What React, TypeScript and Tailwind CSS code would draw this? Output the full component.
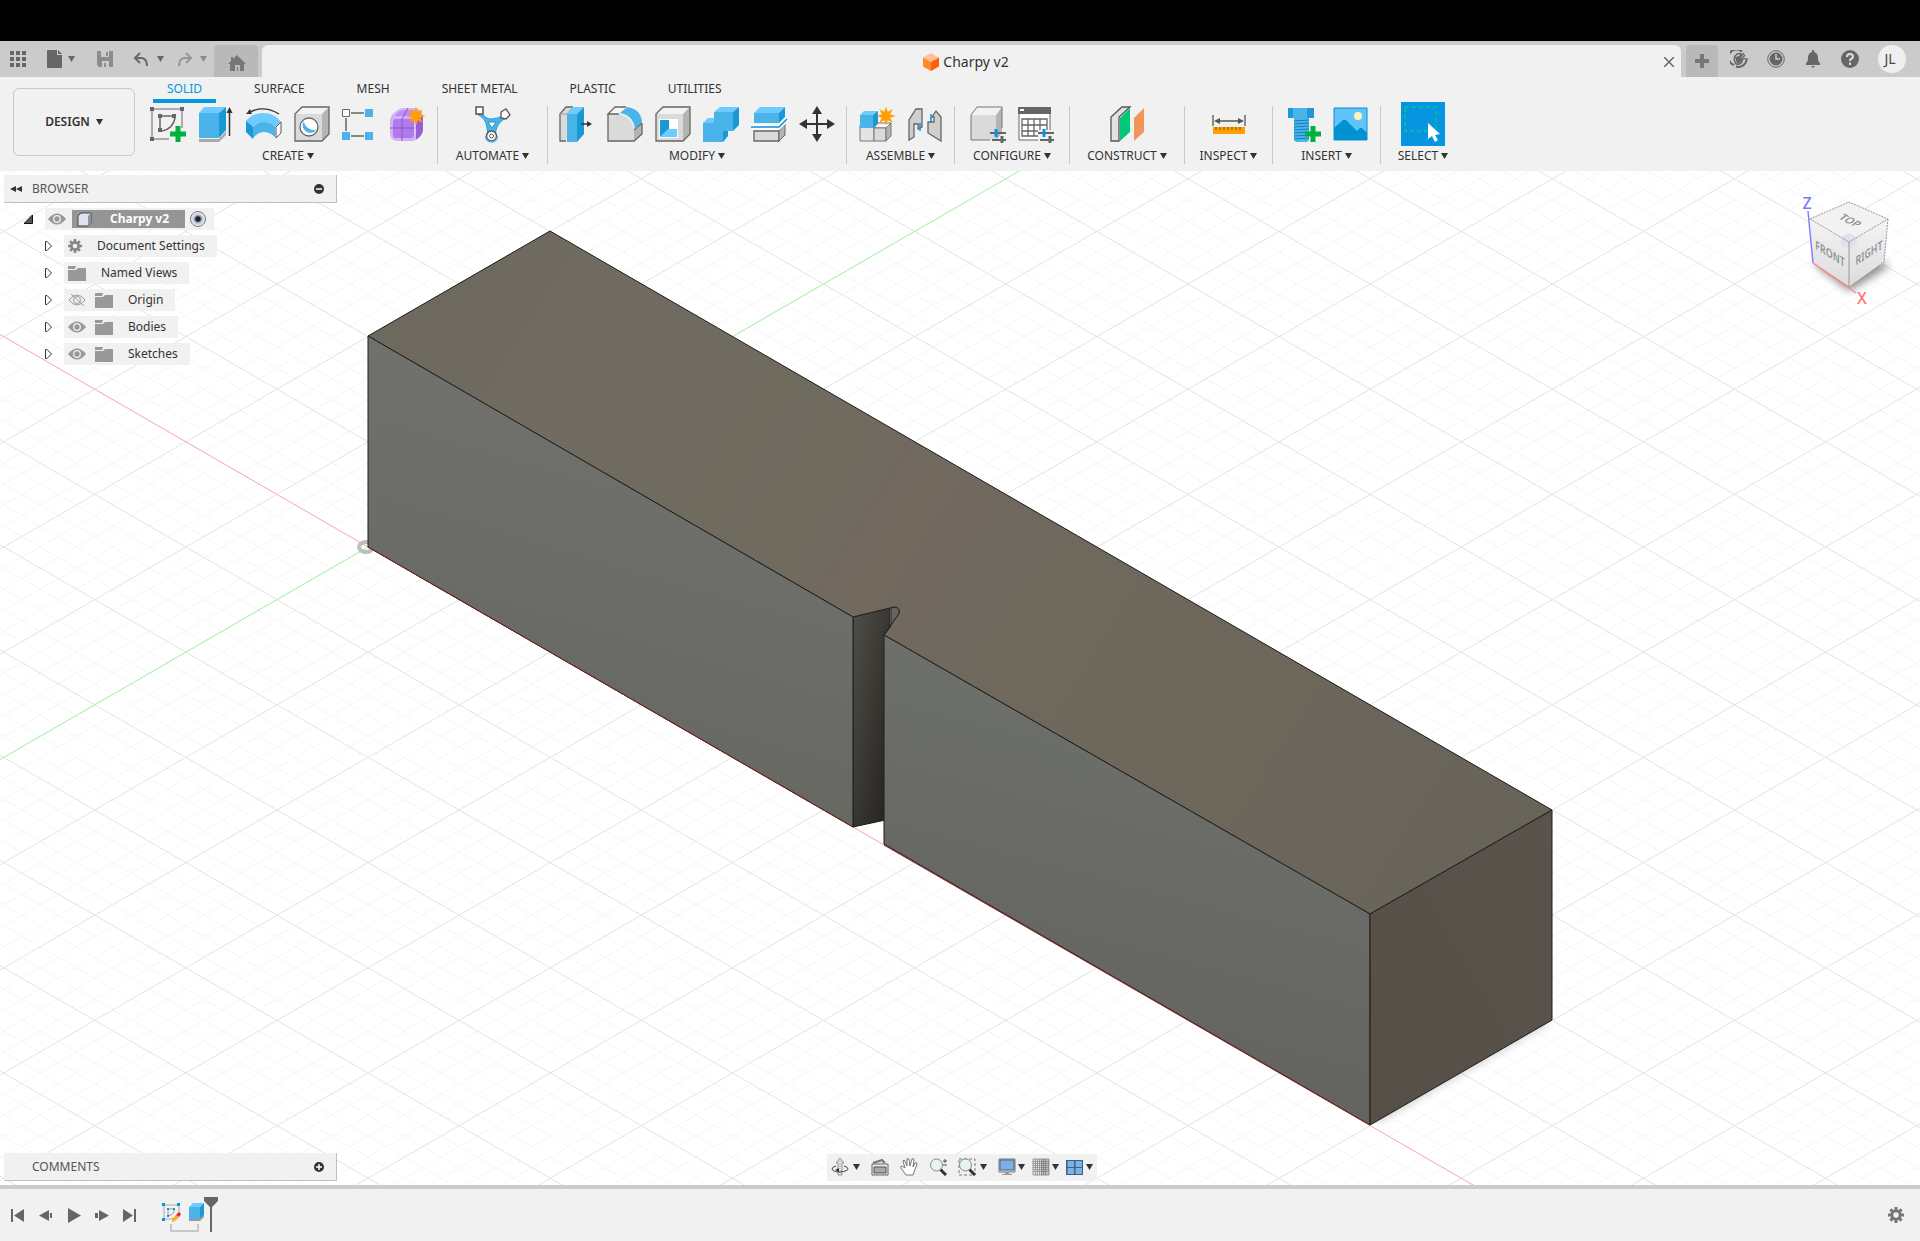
import type { ReactNode } from "react";

/* ---------- small shared pieces ---------- */

function Caret({ className = "text-[#333]" }: { className?: string }) {
  return (
    <svg width="7" height="6" viewBox="0 0 7 6" className={className} aria-hidden="true">
      <path d="M0 0H7L3.5 6Z" fill="currentColor" />
    </svg>
  );
}

function Star({ x, y }: { x: number; y: number }) {
  const points = Array.from({ length: 16 }, (_, i) => {
    const r = i % 2 ? 4.5 : 9.5;
    const a = (i * Math.PI) / 8;
    return `${x + r * Math.sin(a)},${y - r * Math.cos(a)}`;
  }).join(" ");
  return <polygon points={points} fill="#ffa000" />;
}

function Plus({ x, y }: { x: number; y: number }) {
  return <path d={`M${x} ${y - 8}v16M${x - 8} ${y}h16`} stroke="#00b140" strokeWidth="5" />;
}

function Sliders() {
  return (
    <g fill="none" strokeWidth="2">
      <path d="M20 27H36M22 34H36" stroke="#666" />
      <path d="M32 30V37" stroke="#666" strokeWidth="3" />
      <path d="M26 23V31" stroke="#0696e0" strokeWidth="3" />
    </g>
  );
}

function Gear({ size, className }: { size: number; className: string }) {
  return (
    <svg width={size} height={size} viewBox="0 0 16 16" className={className} aria-hidden="true">
      <g stroke="currentColor" strokeWidth="3">
        <path d="M8 0V16M0 8H16M2.400 2.400L13.600 13.600M13.600 2.400L2.400 13.600" />
      </g>
      <circle cx="8" cy="8" r="5.600" fill="currentColor" />
      <circle cx="8" cy="8" r="2.700" fill="#f1f1f1" />
    </svg>
  );
}

/* ---------- ribbon icons, all on a 36px box ---------- */

const icons: Record<string, ReactNode> = {
  sketch: (
    <>
      <path d="M2 5V31M4 3H30M32 5V22M4 33H19" fill="none" stroke="#666" />
      <path d="M10 12V22M12 10H22M25 12Q23 23 12 25" fill="none" stroke="#666" strokeWidth="1.500" />
      <path d="M0 1h4v4H0zM30 1h4v4h-4zM0 31h4v4H0zM8 8h4v4H8zM22 8h4v4h-4zM8 22h4v4H8z" fill="#666" />
      <Plus x={28} y={28} />
    </>
  ),
  extrude: (
    <>
      <path d="M1 7L6 1H28L21 7Z" fill="#6fcbff" />
      <path d="M1 7H21V32H1Z" fill="#4ab3ea" />
      <path d="M21 7L28 1V24L21 32Z" fill="#1a97d5" />
      <path d="M1 33H21L28 25V29L21 36H1Z" fill="#aaa" />
      <path d="M31.500 6V30" stroke="#333" strokeWidth="1.500" />
      <path d="M31.500 1L34.500 7H28.500Z" fill="#333" />
    </>
  ),
  revolve: (
    <>
      <path d="M0 15Q6 7 17 7Q29 7 35 16L28 22Q24 16 17 16Q10 16 6 22Z" fill="#6fcbff" />
      <path d="M0 15L7 21V33L0 26Z" fill="#1a97d5" />
      <path d="M7 21Q11 16 17 16Q24 16 29 21V31Q24 26 17 26Q10 27 7 33Z" fill="#4ab3ea" />
      <path d="M30 21L35 16V27L30 32Z" fill="#fff" stroke="#555" />
      <path d="M4 6Q18 -1 33 8" fill="none" stroke="#333" strokeWidth="1.300" />
      <path d="M0 8L4 3L6 8Z" fill="#333" />
    </>
  ),
  hole: (
    <>
      <path d="M1 8L8 1H35L28 8Z" fill="#f2f2f2" />
      <path d="M1 8H28V35H1Z" fill="#dadada" />
      <path d="M28 8L35 1V28L28 35Z" fill="#b4b4b4" />
      <path d="M1 8L8 1H35V28L28 35H1Z" fill="none" stroke="#666" strokeWidth="1.300" />
      <circle cx="15" cy="21" r="9" fill="#fff" stroke="#666" strokeWidth="1.300" />
      <path d="M10 15A7.500 7.500 0 1 0 22.500 23.500Q18 25 14 22Q10 19 10 15Z" fill="#4ab3ea" />
    </>
  ),
  pattern: (
    <>
      <path d="M9 7H22M9 30H22M4 12V25" stroke="#666" strokeWidth="1.500" />
      <path d="M.500 3.500h7v7h-7z" fill="#fff" stroke="#666" />
      <path d="M23 3h8v8h-8zM0 26h8v8H0zM23 26h8v8h-8z" fill="#4ab3ea" />
    </>
  ),
  form: (
    <>
      <path d="M8 4Q10 2 14 2H26Q33 4 33 12V24Q32 30 27 33Q25 35 20 35H7Q0 34 0 27V14Q1 8 8 4Z" fill="#d3b0f8" />
      <path d="M26 13L33 9V24Q32 30 27 33L24 34Q26 30 26 26Z" fill="#9a5fd0" />
      <path d="M3 16Q3 13 6 13H21Q24 13 24 16V29Q24 32 21 32H6Q3 32 3 29Z" fill="#b07aee" />
      <path d="M5 10Q9 4 14 4H24V10Z" fill="#c08cf5" />
      <path d="M0 22H25L33 17M12 35V13L18 2" fill="none" stroke="#8f57c8" />
      <path d="M25 34V14L31 9" fill="none" stroke="#e2c8ff" strokeWidth="1.500" />
      <Star x={26} y={10} />
    </>
  ),
  automate: (
    <>
      <path d="M5 5Q11 14 17 13Q24 13 29 8L31 12Q23 16 21 24L20 30H13L12 22Q11 12 2 8Z" fill="#4ab3ea" stroke="#2b9bd8" />
      <path d="M13 16H21L17 22Z" fill="#fff" stroke="#1a97d5" />
      <path d="M1 1H8V8H1Z" fill="#fff" stroke="#555" strokeWidth="1.500" />
      <path d="M26 6L31 3L35 9L31 13L26 12Z" fill="#fff" stroke="#555" strokeWidth="1.300" />
      <circle cx="16.500" cy="30" r="5" fill="#fff" stroke="#555" strokeWidth="1.500" />
      <circle cx="16.500" cy="30" r="2" fill="none" stroke="#555" />
      <path d="M10.500 30A6 6 0 0 0 22.500 30" fill="none" stroke="#4ab3ea" strokeWidth="1.500" />
    </>
  ),
  pressPull: (
    <>
      <path d="M7 35H1V8L7 1H14" fill="#dadada" stroke="#666" strokeWidth="1.300" />
      <path d="M1 8H8L14 1" fill="none" stroke="#999" />
      <path d="M8 8L14 1H25L18 8Z" fill="#6fcbff" />
      <path d="M8 8H18V36H8Z" fill="#4ab3ea" />
      <path d="M18 8L25 1V28L18 36Z" fill="#1a97d5" />
      <path d="M22 18H29" stroke="#333" strokeWidth="1.500" />
      <path d="M28 15L33 18L28 21Z" fill="#333" />
    </>
  ),
  fillet: (
    <>
      <path d="M1 8L8 1H19L12 8Z" fill="#f5f5f5" />
      <path d="M1 8H11Q26 10 27 26V35H1Z" fill="#dadada" />
      <path d="M27 24L35 17V28L27 35Z" fill="#b4b4b4" />
      <path d="M12 8H1L8 1H19M1 8V35H27L35 28V17M27 24L35 17" fill="none" stroke="#666" strokeWidth="1.300" />
      <path d="M13 7L20 1Q34 3 35 16L28 23Q26 9 13 7Z" fill="#4ab3ea" />
    </>
  ),
  shell: (
    <>
      <path d="M1 8L8 1H35L28 8Z" fill="#f2f2f2" />
      <path d="M1 8H28V35H1Z" fill="#dadada" />
      <path d="M28 8L35 1V28L28 35Z" fill="#b4b4b4" />
      <path d="M1 8L8 1H35V28L28 35H1Z" fill="none" stroke="#666" strokeWidth="1.300" />
      <path d="M4 13H23V32H4Z" fill="#fff" />
      <path d="M5 14H14V24L5 31Z" fill="#1a97d5" />
      <path d="M5 31L13 23H22V31Z" fill="#6fcbff" />
    </>
  ),
  combine: (
    <>
      <path d="M0 17L5 12H14L11 17ZM11 6L17 1H36L30 6Z" fill="#6fcbff" />
      <path d="M0 17H11V6H30V25H20V36H0Z" fill="#4ab3ea" />
      <path d="M30 6L36 1V19L30 25ZM20 25H25V30L20 36Z" fill="#1a97d5" />
    </>
  ),
  split: (
    <>
      <path d="M3 7L9 1H34L28 7Z" fill="#6fcbff" />
      <path d="M3 7H28V17H3Z" fill="#4ab3ea" />
      <path d="M28 7L34 1V11L28 17Z" fill="#1a97d5" />
      <path d="M3 25H28V35H3Z" fill="#dadada" stroke="#666" strokeWidth="1.300" />
      <path d="M28 25L34 18V29L28 35Z" fill="#b4b4b4" stroke="#666" />
      <path d="M0 21H28L36 13" fill="none" stroke="#fff" strokeWidth="5" />
      <path d="M0 21H28L36 13" fill="none" stroke="#0a8fdc" strokeWidth="1.500" />
    </>
  ),
  move: (
    <>
      <path d="M18 5V31M5 18H31" stroke="#333" strokeWidth="2" />
      <path d="M18 0L23 8H13ZM18 36L23 28H13ZM0 18L8 13V23ZM36 18L28 13V23Z" fill="#333" />
    </>
  ),
  newComponent: (
    <>
      <path d="M1 19H15V35H1Z" fill="#e4e4e4" stroke="#777" />
      <path d="M15 22L19 17H32L27 22Z" fill="#f5f5f5" stroke="#777" />
      <path d="M15 22H27V35H15Z" fill="#dadada" stroke="#777" />
      <path d="M27 22L32 17V30L27 35Z" fill="#b4b4b4" stroke="#777" />
      <path d="M1 9L5 5H19L14 9Z" fill="#6fcbff" />
      <path d="M1 9H14V22H1Z" fill="#4ab3ea" />
      <path d="M14 9L19 5V17L14 22Z" fill="#1a97d5" />
      <Star x={27} y={10} />
    </>
  ),
  joint: (
    <>
      <path d="M2 34V14L9 3H15V21L11 23V18H7V31Z" fill="#cfcfcf" stroke="#666" strokeWidth="1.300" />
      <path d="M25 11L29 5L34 11V35L21 27V16H27V11Z" fill="#cfcfcf" stroke="#666" strokeWidth="1.300" />
      <path d="M13 17V25M24 8V16" stroke="#0a8fdc" strokeWidth="1.500" />
    </>
  ),
  configuration: (
    <>
      <path d="M1 9L7 1H32L26 9Z" fill="#f2f2f2" />
      <path d="M1 9H26V34H1Z" fill="#dadada" />
      <path d="M26 9L32 1V27L26 34Z" fill="#b4b4b4" />
      <path d="M32 22V1H7L1 9V34H20" fill="none" stroke="#777" />
      <Sliders />
    </>
  ),
  configTable: (
    <>
      <path d="M1 2H32V34H1Z" fill="#fff" stroke="#666" />
      <path d="M0 1H33V8H0Z" fill="#666" />
      <path d="M2 3H6V5H2Z" fill="#fff" />
      <path d="M4 13H29V30H4ZM4 19H29M4 25H29M10 13V30M16 13V30M22 13V30" fill="none" stroke="#666" strokeWidth="1.300" />
      <path d="M20 24H36V37H20Z" fill="#f1f1f1" />
      <Sliders />
    </>
  ),
  plane: (
    <>
      <path d="M2 11L13 1H21L10 11V35H2Z" fill="#e2e2e2" stroke="#555" strokeWidth="1.300" />
      <path d="M11 12L21 2V26L11 35Z" fill="#00c878" />
      <path d="M25 12L35 2V26L25 35Z" fill="#f29559" />
    </>
  ),
  measure: (
    <>
      <path d="M2 9V20M34 9V20M5 15H31" stroke="#555" strokeWidth="1.300" />
      <path d="M3 15L9 12V18ZM33 15L27 12V18Z" fill="#555" />
      <path d="M2 21H34V28H2Z" fill="#ffa000" />
      <path d="M5 21V24M9 21V24M13 21V24M17 21V24M21 21V24M25 21V24M29 21V24" stroke="#7a4a00" />
    </>
  ),
  fastener: (
    <>
      <path d="M3 2H29V12H3Z" fill="#1f98d8" />
      <path d="M8 2H22V12H8Z" fill="#4ab3ea" />
      <path d="M9 12H24V34L22 36H11L9 34Z" fill="#4ab3ea" />
      <path d="M9 15L24 14M9 18L24 17M9 21L24 20M9 24L24 23M9 27L24 26M9 30L24 29M9 33L24 32" stroke="#1280bd" />
      <Plus x={28} y={28} />
    </>
  ),
  canvas: (
    <>
      <path d="M1 2H34V34H1Z" fill="#5fc4fa" stroke="#0a8fcf" />
      <path d="M1 22L10 14Q12 13 14 15L24 25L27 22Q28 21 30 23L34 27V34H1Z" fill="#0292d2" />
      <circle cx="25" cy="10" r="4" fill="#fdf6b8" />
    </>
  ),
  select: (
    <>
      <path d="M0 1H31V25H0Z" fill="none" stroke="#00c896" strokeWidth="1.500" strokeDasharray="4 3" />
      <path d="M23 17L35 28L30 29L33 34L30 36L27 30L23 33Z" fill="#fff" />
    </>
  ),
};

interface RibbonGroupProps {
  label: string;
  tools: { icon: string; name: string; active?: boolean }[];
  className: string;
}

function RibbonGroup({ label, tools, className }: RibbonGroupProps) {
  return (
    <div className={`flex h-[58px] shrink-0 flex-col items-center justify-between border-[#c8c8c8] ${className}`}>
      <div className="flex h-9 items-center gap-3">
        {tools.map((tool) => (
          <button key={tool.name} aria-label={tool.name} className={tool.active ? "-m-1 bg-[#0696e0] p-1" : ""}>
            <svg width="36" height="36" viewBox="0 0 36 36" className="overflow-visible">
              {icons[tool.icon]}
            </svg>
          </button>
        ))}
      </div>
      <button className="flex items-center gap-[3px] leading-4">
        {label}
        <Caret />
      </button>
    </div>
  );
}

/* ---------- title bar ---------- */

function TitleBar() {
  return (
    <header className="flex h-9 shrink-0 items-end bg-[#cbcbcb] text-[#666]">
      <div className="flex h-9 w-[214px] shrink-0 items-center pl-2.5">
        <button aria-label="Show data panel">
          <svg width="16" height="16" viewBox="0 0 16 16" fill="currentColor">
            <path d="M0 0h4v4H0zM6 0h4v4H6zM12 0h4v4h-4zM0 6h4v4H0zM6 6h4v4H6zM12 6h4v4h-4zM0 12h4v4H0zM6 12h4v4H6zM12 12h4v4h-4z" />
          </svg>
        </button>
        <button aria-label="File" className="ml-[21px] flex items-center gap-1.5">
          <svg width="15" height="18" viewBox="0 0 15 18" fill="currentColor">
            <path d="M0 1Q0 0 1 0H10V5H15V17Q15 18 14 18H1Q0 18 0 17ZM11 0L15 4H11Z" />
          </svg>
          <Caret className="text-[#666]" />
        </button>
        <button aria-label="Save" className="ml-[22px]">
          <svg width="16" height="16" viewBox="0 0 16 16" className="text-[#8c8c8c]">
            <path d="M0 0H16V16H2L0 14Z" fill="currentColor" />
            <path d="M4 0H12V6H4ZM5 10H12V16H5Z" fill="#cbcbcb" />
            <path d="M9 1H11V5H9ZM7 12H9V16H7Z" fill="currentColor" />
          </svg>
        </button>
        <button aria-label="Undo" className="ml-[21px] flex items-center gap-2">
          <svg width="15" height="14" viewBox="0 0 15 14" fill="none" stroke="currentColor" strokeWidth="2">
            <path d="M6 1L1 6L6 11M1 6H8Q13 7 13 14" />
          </svg>
          <Caret className="text-[#666]" />
        </button>
        <button aria-label="Redo" className="ml-[13px] flex items-center gap-2">
          <svg width="15" height="14" viewBox="0 0 15 14" fill="none" stroke="#969696" strokeWidth="2">
            <path d="M9 1L14 6L9 11M14 6H7Q2 7 2 14" />
          </svg>
          <Caret className="text-[#8c8c8c]" />
        </button>
      </div>
      <button aria-label="Home" className="flex h-8 w-11 shrink-0 items-center justify-center rounded-t bg-[#b9b9b9] pt-1 pl-0.5">
        <svg width="18" height="16" viewBox="0 0 18 16" className="text-[#777]">
          <path d="M9 0L18 9H16V16H2V9H0L3 6V2H5V4Z" fill="currentColor" />
          <path d="M7 10H12V16H7Z" fill="#b9b9b9" />
          <path d="M9 12H10V16H9Z" fill="currentColor" />
        </svg>
      </button>
      <div className="ml-1 flex h-8 flex-1 items-center rounded-t-md bg-[#f1f1f1] pt-0.5 pr-[7px]">
        <div className="flex flex-1 items-center justify-center gap-1 pl-1.5 text-sm text-[#333]">
          <svg width="16" height="18" viewBox="0 0 16 18" aria-hidden="true">
            <path d="M8 0L16 4.500L8 9L0 4.500Z" fill="#ffc09a" />
            <path d="M0 4.500L8 9V18L0 13.500Z" fill="#ff8a2c" />
            <path d="M16 4.500L8 9V18L16 13.500Z" fill="#ff5f0a" />
          </svg>
          Charpy v2
        </div>
        <button aria-label="Close tab">
          <svg width="10" height="10" viewBox="0 0 10 10" stroke="#666" strokeWidth="1.500">
            <path d="M0 0L10 10M10 0L0 10" />
          </svg>
        </button>
      </div>
      <button aria-label="New tab" className="ml-[5px] flex h-8 w-8 shrink-0 items-center justify-center rounded-t bg-[#b9b9b9]">
        <svg width="14" height="14" viewBox="0 0 14 14" stroke="#777" strokeWidth="4">
          <path d="M7 0V14M0 7H14" />
        </svg>
      </button>
      <div className="flex h-9 shrink-0 items-center gap-[19px] pr-3.5 pl-3">
        <button aria-label="Extensions">
          <svg width="18" height="18" viewBox="0 0 18 18" fill="none" stroke="currentColor">
            <path d="M4 15A8 8 0 1 1 12 1.600M16.500 8A8 8 0 0 1 6 16.500" strokeWidth="2" />
            <path d="M6 14Q2 8 7 4Q10 3 11 4L9 8L14 3M10 10L15 5M11 11L15 8M6 14Q11 15 12 11L8 7" strokeWidth="1.500" />
            <path d="M5 7L10 6L12 11L7 14Z" fill="currentColor" stroke="none" />
          </svg>
        </button>
        <button aria-label="Job status">
          <svg width="18" height="18" viewBox="0 0 18 18">
            <circle cx="9" cy="9" r="8.300" fill="none" stroke="currentColor" />
            <circle cx="9" cy="9" r="6.500" fill="currentColor" />
            <path d="M9 4V9H13" fill="none" stroke="#cbcbcb" strokeWidth="1.500" />
          </svg>
        </button>
        <button aria-label="Notifications">
          <svg width="18" height="18" viewBox="0 0 18 18" fill="currentColor">
            <path d="M8 0H10V2Q14 3 14 8Q14 12 16 13V15H2V13Q4 12 4 8Q4 3 8 2ZM7 16H11L9 18Z" />
          </svg>
        </button>
        <button aria-label="Help">
          <svg width="18" height="18" viewBox="0 0 18 18">
            <circle cx="9" cy="9" r="9" fill="currentColor" />
            <path d="M6 7Q6 4 9 4Q12 4 12 6.500Q12 8 10 9Q9 9.500 9 11M9 12.500V15" fill="none" stroke="#dedede" strokeWidth="2" />
          </svg>
        </button>
        <button className="flex h-7 w-7 items-center justify-center rounded-full bg-[#efefef] pr-1 text-sm text-[#444]">JL</button>
      </div>
    </header>
  );
}

/* ---------- ribbon ---------- */

const tabs = ["SOLID", "SURFACE", "MESH", "SHEET METAL", "PLASTIC", "UTILITIES"];

const groups: RibbonGroupProps[] = [
  {
    label: "CREATE",
    className: "w-[299px] border-r",
    tools: [
      { icon: "sketch", name: "Create Sketch" },
      { icon: "extrude", name: "Extrude" },
      { icon: "revolve", name: "Revolve" },
      { icon: "hole", name: "Hole" },
      { icon: "pattern", name: "Rectangular Pattern" },
      { icon: "form", name: "Create Form" },
    ],
  },
  { label: "AUTOMATE", className: "w-[110px] border-r", tools: [{ icon: "automate", name: "Automated Modeling" }] },
  {
    label: "MODIFY",
    className: "w-[299px] border-r",
    tools: [
      { icon: "pressPull", name: "Press Pull" },
      { icon: "fillet", name: "Fillet" },
      { icon: "shell", name: "Shell" },
      { icon: "combine", name: "Combine" },
      { icon: "split", name: "Split Body" },
      { icon: "move", name: "Move/Copy" },
    ],
  },
  {
    label: "ASSEMBLE",
    className: "w-[108px] border-r",
    tools: [
      { icon: "newComponent", name: "New Component" },
      { icon: "joint", name: "Joint" },
    ],
  },
  {
    label: "CONFIGURE",
    className: "w-[115px] border-r",
    tools: [
      { icon: "configuration", name: "Create Configuration" },
      { icon: "configTable", name: "Configuration Table" },
    ],
  },
  { label: "CONSTRUCT", className: "w-[115px] border-r", tools: [{ icon: "plane", name: "Offset Plane" }] },
  { label: "INSPECT", className: "w-[88px] border-r", tools: [{ icon: "measure", name: "Measure" }] },
  {
    label: "INSERT",
    className: "w-[108px] border-r",
    tools: [
      { icon: "fastener", name: "Insert Fastener" },
      { icon: "canvas", name: "Canvas" },
    ],
  },
  { label: "SELECT", className: "w-[84px]", tools: [{ icon: "select", name: "Select", active: true }] },
];

function Ribbon() {
  return (
    <div className="flex h-[94px] shrink-0 bg-[#f1f1f1] text-xs text-[#333]">
      <button className="mt-[11px] ml-[13px] flex h-[68px] w-[122px] shrink-0 items-center justify-center gap-1.5 rounded-md border border-[#c8c8c8] font-semibold">
        DESIGN
        <Caret />
      </button>
      <div className="flex flex-col">
        <nav className="flex h-[29px] gap-6 pl-[18px]">
          {tabs.map((tab) => (
            <button
              key={tab}
              className={
                tab === "SOLID"
                  ? "h-[26px] border-b-4 border-[#0696e0] px-3.5 pt-0.5 text-[#0696e0]"
                  : "h-[26px] border-b-4 border-transparent px-3.5 pt-0.5"
              }
            >
              {tab}
            </button>
          ))}
        </nav>
        <div className="flex pl-1">
          {groups.map((group) => (
            <RibbonGroup key={group.label} {...group} />
          ))}
        </div>
      </div>
    </div>
  );
}

/* ---------- browser tree ---------- */

function Eye({ hidden = false }: { hidden?: boolean }) {
  return (
    <svg width="18" height="12" viewBox="0 0 18 12" aria-hidden="true">
      {hidden ? (
        <g fill="none" stroke="#999">
          <path d="M1 6Q9 -4 17 6Q9 16 1 6ZM3 0L16 12" />
          <circle cx="9" cy="6" r="3.500" />
        </g>
      ) : (
        <>
          <path d="M0 6Q9 -5 18 6Q9 17 0 6Z" fill="#999" />
          <circle cx="9" cy="6" r="3.300" fill="none" stroke="#f1f1f1" strokeWidth="1.300" />
        </>
      )}
    </svg>
  );
}

function Folder() {
  return (
    <svg width="18" height="15" viewBox="0 0 18 15" aria-hidden="true">
      <path d="M0 4H8L10 2H18V15H0ZM0 0H8L7 3H0Z" fill="#999" />
    </svg>
  );
}

const treeItems = [
  { label: "Document Settings", icon: "gear" },
  { label: "Named Views", icon: "folder" },
  { label: "Origin", icon: "folder", eye: "off" },
  { label: "Bodies", icon: "folder", eye: "on" },
  { label: "Sketches", icon: "folder", eye: "on" },
];

function Browser() {
  return (
    <aside className="w-[333px] text-xs text-[#333]">
      <div className="flex h-7 items-center border-r border-b border-[#c0c0c0] bg-[#f1f1f1] pr-3 pl-1.5 text-[#555]">
        <button aria-label="Collapse browser">
          <svg width="12" height="6" viewBox="0 0 12 6" fill="#333">
            <path d="M6 0V6L0 3ZM12 0V6L6 3Z" />
          </svg>
        </button>
        <span className="ml-2.5 flex-1">BROWSER</span>
        <button aria-label="Hide browser">
          <svg width="10" height="10" viewBox="0 0 10 10">
            <circle cx="5" cy="5" r="5" fill="#333" />
            <path d="M2 5H8" stroke="#fff" strokeWidth="1.500" />
          </svg>
        </button>
      </div>
      <ul className="mt-[5px] flex flex-col gap-[5px]">
        <li className="flex items-center pl-5">
          <button aria-label="Collapse Charpy v2">
            <svg width="9" height="9" viewBox="0 0 9 9">
              <path d="M8.500 0V8.500H0Z" fill="#555" stroke="#111" />
            </svg>
          </button>
          <div className="ml-3 flex h-[22px] items-center bg-[#f1f1f1] pr-2 pl-[3px]">
            <Eye />
            <div className="ml-1.5 flex h-[18px] w-[113px] items-center bg-[#959595] pl-[5px] font-bold text-white">
              <svg width="15" height="15" viewBox="0 0 15 15" aria-hidden="true">
                <path d="M1 4L4 1H14V11L11 14H1Z" fill="#dfe3ee" stroke="#444" />
                <path d="M11 4L14 1V11L11 14Z" fill="#8f95a5" />
              </svg>
              <span className="ml-[18px]">Charpy v2</span>
            </div>
            <input
              type="radio"
              name="active-component"
              defaultChecked
              aria-label="Activate Charpy v2"
              className="ml-[5px] h-4 w-4 appearance-none rounded-full border border-[#777] bg-[radial-gradient(circle,#222_2px,#b5c2d8_4px,#eef1f6_7px)]"
            />
          </div>
        </li>
        {treeItems.map((item) => (
          <li key={item.label} className="flex items-center pl-[41px]">
            <button aria-label={`Expand ${item.label}`}>
              <svg width="7" height="10" viewBox="0 0 7 10">
                <path d="M.500 .500H2L6.500 5L2 9.500H.500Z" fill="#fff" stroke="#333" />
              </svg>
            </button>
            <div className="ml-3 flex h-[22px] items-center bg-[#f1f1f1] pr-3 pl-1">
              {item.eye && (
                <span className="mr-[9px]">
                  <Eye hidden={item.eye === "off"} />
                </span>
              )}
              {item.icon === "gear" ? <Gear size={14} className="text-[#888]" /> : <Folder />}
              <span className="ml-[15px]">{item.label}</span>
            </div>
          </li>
        ))}
      </ul>
    </aside>
  );
}

/* ---------- 3D scene ---------- */

const ORIGIN = { x: 368, y: 547 };
const SLOPE = 0.5774;
const STEP = 21.04;

// lines of the isometric ground grid, every fifth one is a major line
function gridPath(major: boolean) {
  let d = "";
  for (let k = -90; k <= 90; k++) {
    if ((k % 5 === 0) !== major) continue;
    for (const dir of [1, -1]) {
      const y0 = ORIGIN.y + k * STEP - dir * SLOPE * ORIGIN.x;
      d += `M0 ${y0.toFixed(1)}L1920 ${(y0 + dir * SLOPE * 1920).toFixed(1)}`;
    }
  }
  return d;
}

function Scene() {
  return (
    <svg
      viewBox="0 171 1920 1014"
      preserveAspectRatio="xMidYMid slice"
      className="absolute inset-0 h-full w-full"
      role="img"
      aria-label="Charpy specimen"
    >
      <defs>
        <linearGradient id="front" gradientUnits="userSpaceOnUse" x1="700" y1="440" x2="600" y2="780">
          <stop offset="0" stopColor="#70716d" />
          <stop offset="1" stopColor="#676762" />
        </linearGradient>
        <linearGradient id="front2" gradientUnits="userSpaceOnUse" x1="1160" y1="720" x2="1080" y2="1020">
          <stop offset="0" stopColor="#6d6f6b" />
          <stop offset="1" stopColor="#646560" />
        </linearGradient>
        <linearGradient id="top" gradientUnits="userSpaceOnUse" x1="440" y1="260" x2="1450" y2="880">
          <stop offset="0" stopColor="#6d695f" />
          <stop offset=".15" stopColor="#716b61" />
          <stop offset=".3" stopColor="#6f6b5f" />
          <stop offset=".45" stopColor="#72695f" />
          <stop offset=".6" stopColor="#6e685d" />
          <stop offset=".8" stopColor="#6c665b" />
          <stop offset="1" stopColor="#69645a" />
        </linearGradient>
        <linearGradient id="side" x1="0" y1="1" x2="1" y2="0">
          <stop offset="0" stopColor="#554f48" />
          <stop offset="1" stopColor="#59534c" />
        </linearGradient>
        <linearGradient id="notch" x1="0" y1="0" x2="1" y2="1">
          <stop offset="0" stopColor="#504e48" />
          <stop offset="1" stopColor="#22211d" />
        </linearGradient>
        <filter id="soft">
          <feGaussianBlur stdDeviation="4" />
        </filter>
      </defs>
      <path d={gridPath(false)} stroke="#f6f6f6" fill="none" />
      <path d={gridPath(true)} stroke="#e3e3e3" fill="none" />
      <path d="M0 334.500L1474 1185.600" stroke="#ffb0b0" />
      <path d="M0 759.500L1020 170.600" stroke="#a5f7a5" />
      <path d="M1380 1122L1552 1022L1540 1020L1370 1118Z" fill="#000" opacity=".18" filter="url(#soft)" />
      <ellipse cx="366" cy="547" rx="7" ry="5" fill="none" stroke="#bdbdbd" strokeWidth="4" />
      <g strokeLinejoin="round">
        <path d="M853 617L890 607V819L853 827Z" fill="url(#notch)" stroke="#1a1a1a" />
        <path d="M368 336L550 231L1552 810L1370 914L884 635L898 615Q902 608 894 607L853 617Z" fill="url(#top)" stroke="#1e1e1c" />
        <path d="M884 635L898 615Q902 608 894 607L891 608V626Z" fill="#66645d" stroke="#222" />
        <path d="M368 336L853 617V827L368 547Z" fill="url(#front)" stroke="#1e1e1c" />
        <path d="M884 635L1370 914V1125L884 844Z" fill="url(#front2)" stroke="#1e1e1c" />
        <path d="M1370 914L1552 810V1020L1370 1125Z" fill="url(#side)" stroke="#1e1e1c" />
        <path d="M368 547L853 827M884 845L1370 1125" stroke="#7c2426" />
      </g>
    </svg>
  );
}

function ViewCube() {
  return (
    <svg width="110" height="124" viewBox="1796 189 110 124" className="font-semibold" role="img" aria-label="View cube">
      <defs>
        <filter id="cubeShadow" x="-30%" y="-30%" width="160%" height="180%">
          <feGaussianBlur stdDeviation="4" />
        </filter>
        <linearGradient id="cubeFace" x1="0" y1="0" x2="0" y2="1">
          <stop offset="0" stopColor="#f4f4f4" />
          <stop offset="1" stopColor="#dcdcdc" />
        </linearGradient>
      </defs>
      <path d="M1814 264L1849 291L1890 266L1849 250Z" fill="#000" opacity=".45" filter="url(#cubeShadow)" />
      <path d="M1810 219L1849 242V287L1813 263Z" fill="url(#cubeFace)" />
      <path d="M1849 242L1888 219L1884 262L1849 287Z" fill="url(#cubeFace)" />
      <path d="M1810 219L1849 202L1888 219L1849 242Z" fill="#f2f2f2" />
      <path d="M1841 237L1849 233L1857 237V245L1849 249L1841 245Z" fill="#dfe2e8" />
      <path d="M1810 219L1849 202L1888 219L1849 242ZM1888 219L1884 262L1849 287" fill="none" stroke="#999" strokeDasharray="2 1" />
      <path d="M1849 242V287L1813 263" fill="none" stroke="#999" />
      <path d="M1808 211L1813 263" stroke="#8080ff" strokeWidth="1.500" />
      <path d="M1813 263L1856 293" stroke="#ff8a8a" strokeWidth="1.500" />
      <g fontSize="11" fill="#8e9298" textAnchor="middle">
        <text transform="matrix(.86 .44 -.8 .6 1847 223)">TOP</text>
        <text transform="matrix(.8 .5 0 1.1 1830 258)">FRONT</text>
        <text transform="matrix(.8 -.5 0 1.1 1869 257)">RIGHT</text>
      </g>
      <g fontSize="16" fontWeight="500" textAnchor="middle">
        <text x="1807" y="209" fill="#7878ff">
          Z
        </text>
        <text x="1862" y="304" fill="#ff7070">
          X
        </text>
      </g>
    </svg>
  );
}

/* ---------- navigation bar ---------- */

const lens = (
  <>
    <path d="M11 11L17 17" stroke="#333" strokeWidth="3" />
    <circle cx="7.500" cy="7" r="6" fill="#e6f4f4" stroke="#888" />
  </>
);

const navTools = [
  {
    name: "Orbit",
    menu: true,
    art: (
      <>
        <path d="M9 0L13 5H11V17H7V5H5Z" fill="#d5d9e2" stroke="#999" />
        <path d="M5 8Q1 9 1 11Q2 14 9 14Q17 13 17 11Q17 9 13 8" fill="none" stroke="#444" />
        <path d="M4 12L8 10V14Z" fill="#333" />
      </>
    ),
  },
  {
    name: "Look At",
    art: (
      <>
        <path d="M2 5L11 2L14 5" fill="#ddd" stroke="#777" strokeWidth="2" />
        <path d="M1 6H17V17H1Z" fill="#e8e8e8" stroke="#666" />
        <path d="M3 9H15V15H3Z" fill="#a5a8ae" stroke="#555" />
      </>
    ),
  },
  {
    name: "Pan",
    art: (
      <path
        d="M6 17L1 10Q0 8 2 8L5 10L3 3Q4 1 5 3L7 8L7 1Q8 0 9 1L10 8L12 1Q14 0 14 2L13 9L15 5Q17 4 17 6L14 14L13 17Z"
        fill="#fff"
        stroke="#777"
      />
    ),
  },
  {
    name: "Zoom",
    art: (
      <>
        {lens}
        <path d="M14 3H18M16 1V5M14 7H18" stroke="#555" />
      </>
    ),
  },
  {
    name: "Fit",
    menu: true,
    art: (
      <>
        <path d="M1 1H17V17H1Z" fill="none" stroke="#777" strokeDasharray="3 2" />
        {lens}
      </>
    ),
  },
  {
    name: "Display Settings",
    menu: true,
    tight: true,
    art: (
      <>
        <path d="M1 1H17V14H1Z" fill="#ddd" stroke="#777" />
        <path d="M2 2H16V12H2Z" fill="#7fb0e0" stroke="#3a6698" />
        <path d="M7 14H11V16H14V17H4V16H7Z" fill="#999" />
      </>
    ),
  },
  {
    name: "Grid and Snaps",
    menu: true,
    tight: true,
    art: (
      <>
        <path d="M1 1H17V17H1Z" fill="#e4e4e4" stroke="#999" />
        <path
          d="M1 3.500H17M1 5.500H17M1 7.500H17M1 9.500H17M1 11.500H17M1 13.500H17M3.500 1V17M5.500 1V17M7.500 1V17M9.500 1V17M11.500 1V17M13.500 1V17"
          stroke="#777"
          strokeWidth=".6"
        />
        <path d="M9 1H17V17H9Z" fill="#555" opacity=".25" />
      </>
    ),
  },
  {
    name: "Viewports",
    menu: true,
    tight: true,
    art: (
      <>
        <path d="M0 2H17V17H0Z" fill="#35608f" />
        <path d="M1.500 3H8V9H1.500ZM9.500 3H16V9H9.500ZM1.500 10H8V16H1.500ZM9.500 10H16V16H9.500Z" fill="#7fb0e0" />
      </>
    ),
  },
];

function NavigationBar() {
  return (
    <div className="flex h-[27px] items-center gap-[7px] bg-[#f1f1f1] px-1">
      {navTools.map((tool) => (
        <button key={tool.name} aria-label={tool.name} className={`flex items-center ${tool.tight ? "gap-0.5" : "mr-1 gap-1"}`}>
          <svg width="18" height="18" viewBox="0 0 18 18">
            {tool.art}
          </svg>
          {tool.menu && <Caret />}
        </button>
      ))}
    </div>
  );
}

/* ---------- timeline ---------- */

const playback = [
  { name: "Go to start", d: "M0 1H2V14H0ZM13 1V14L3 7.500Z" },
  { name: "Step back", d: "M10 2V13L0 7.500ZM11 5H13V10H11Z" },
  { name: "Play", d: "M1 0L14 7.500L1 15Z" },
  { name: "Step forward", d: "M4 2V13L14 7.500ZM0 5H3V10H0Z" },
  { name: "Go to end", d: "M0 1V14L10 7.500ZM11 1H13V14H11Z" },
];

function Timeline() {
  return (
    <footer className="flex h-14 shrink-0 items-center border-t-4 border-[#cbcbcb] bg-[#f1f1f1] pr-4 pl-[11px] text-[#666]">
      <div className="flex gap-3.5">
        {playback.map((step) => (
          <button key={step.name} aria-label={step.name}>
            <svg width="14" height="15" viewBox="0 0 14 15" fill="currentColor">
              <path d={step.d} />
            </svg>
          </button>
        ))}
      </div>
      <svg width="58" height="36" viewBox="0 0 58 36" className="ml-6 flex-none" role="img" aria-label="Sketch and extrude features">
        <path d="M3 8H18V18M3 8V22H12" fill="none" stroke="#aaa" />
        <path d="M7 12H13Q14 17 7 19Z" fill="none" stroke="#999" />
        <path d="M1 6h3v3H1zM16 6h3v3h-3zM1 21h3v3H1zM6 11h2v2H6zM12 11h2v2h-2zM6 18h2v2H6z" fill="#0696e0" />
        <path d="M11 22L15 18L18 20L14 24L11 25Z" fill="#ffb020" />
        <path d="M15 18L18 15L20 17L18 20Z" fill="#e22" />
        <path d="M28 10L32 6H43L39 10Z" fill="#6fcbff" />
        <path d="M28 10H39V22H28Z" fill="#4ab3ea" />
        <path d="M39 10L43 6V18L39 22Z" fill="#1a97d5" />
        <path d="M28 22H39L43 18V20L39 24H28Z" fill="#999" />
        <path d="M10 27V34H37V27" fill="none" stroke="#c8c8c8" strokeWidth="2" />
        <path d="M43 0H57V4L51 10V35H49V10L43 4Z" fill="#666" />
      </svg>
      <button aria-label="Timeline settings" className="ml-auto">
        <Gear size={16} className="text-[#777]" />
      </button>
    </footer>
  );
}

export default function App() {
  return (
    <div className="flex h-screen flex-col overflow-hidden bg-white font-['Noto_Sans','Open_Sans',sans-serif]">
      <div className="h-[41px] shrink-0 bg-black" />
      <TitleBar />
      <Ribbon />
      <main className="relative flex flex-1 flex-col justify-between">
        <Scene />
        <div className="relative flex justify-between pt-1 pr-3.5 pl-1">
          <Browser />
          <div className="pt-3.5">
            <ViewCube />
          </div>
        </div>
        <div className="relative grid grid-cols-[1fr_auto_1fr] items-center pb-1 pl-1">
          <div className="flex h-7 w-[333px] items-center border-r border-b border-[#c0c0c0] bg-[#f1f1f1] pr-3 pl-7 text-xs text-[#555]">
            <span className="flex-1">COMMENTS</span>
            <button aria-label="Show comments">
              <svg width="10" height="10" viewBox="0 0 10 10">
                <circle cx="5" cy="5" r="5" fill="#333" />
                <path d="M2 5H8M5 2V8" stroke="#fff" strokeWidth="1.500" />
              </svg>
            </button>
          </div>
          <NavigationBar />
          <div />
        </div>
      </main>
      <Timeline />
    </div>
  );
}
